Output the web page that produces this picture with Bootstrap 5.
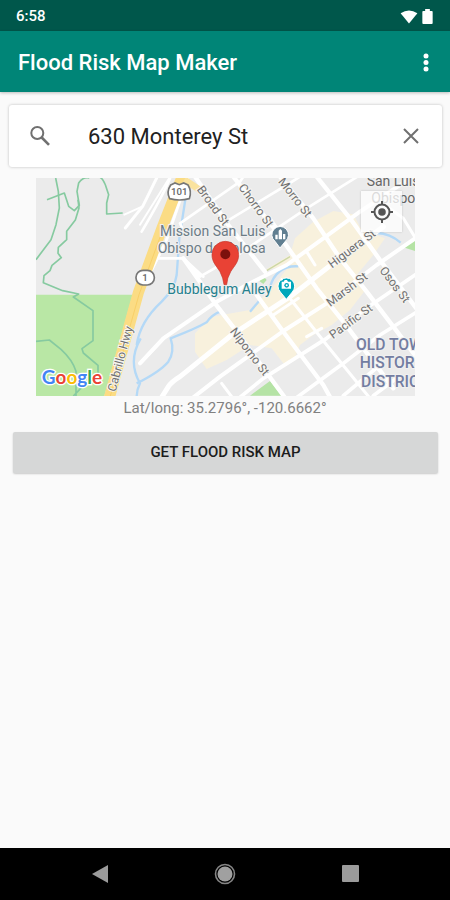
<!DOCTYPE html>
<html lang="en">
<head>
<meta charset="utf-8">
<meta name="viewport" content="width=device-width, initial-scale=1">
<title>Flood Risk Map Maker</title>
<link href="https://cdn.jsdelivr.net/npm/bootstrap@5.3.0/dist/css/bootstrap.min.css" rel="stylesheet">
<style>
body{font-family:Roboto,"Liberation Sans",sans-serif;background:#fafafa;color:#212121}
svg{display:block}
.status-bar{background:#00574b;height:31px;font-size:15px;font-weight:500;padding:2px 17px 0 16px}
.app-bar{background:#008577;height:61px;padding:2px 18px 0;box-shadow:0 1px 3px rgba(0,0,0,.25)}
.app-title{font-size:22px;font-weight:500;line-height:28px}
.icon-btn{background:none;border:0;padding:0;color:#707070}
.search-box{background:#fff;height:62px;margin:13px 8px 0 9px;padding:0 20px;border-radius:3px;box-shadow:0 0 3px rgba(0,0,0,.25)}
.search-box input{font-size:22px;color:#212121;margin-left:37px;min-width:0;outline:0}
.map-wrap{margin:11px 35px 0 36px}
.map-wrap svg.city-map{width:100%;height:auto}
.locate{position:absolute;top:13px;right:13px;width:41px;height:41px;background:rgba(255,255,255,.76);border:0;padding:0;box-shadow:0 0 2px rgba(0,0,0,.18)}
.coords{font-size:15px;line-height:24px;color:#808080}
.risk-btn{background:#d6d7d7;border:0;border-radius:2px;margin:12px 12px 0 13px;height:41px;font-size:15px;font-weight:500;color:#1c1c1c;padding:0;box-shadow:0 1px 2px rgba(0,0,0,.2)}
.risk-btn:hover{background:#c8c9c9}
.system-nav{background:#000;height:52px;padding:0 37px}
.system-nav button{width:125px;height:52px}
.road path{fill:none;stroke:#fff;stroke-linejoin:round;stroke-linecap:round}
.trail path{fill:none;stroke:#86caa0;stroke-width:5;stroke-linejoin:round}
.water path{fill:none;stroke:#b4d9f7;stroke-width:7;stroke-linejoin:round}
.street text{font-size:36px;fill:#707070;stroke:#f6f5f1;stroke-width:6;paint-order:stroke;text-anchor:middle}
.place{font-size:42px;fill:#6b7b85;stroke:#f0f0f0;stroke-width:6;paint-order:stroke}
.district{font-size:47px;font-weight:500;fill:#737da1;stroke:#f0f0f0;stroke-width:6;paint-order:stroke}
.brand{font-family:Lato,sans-serif;font-size:57px;font-weight:700;stroke:#fff;stroke-width:8;paint-order:stroke}
</style>
<script src="https://cdn.jsdelivr.net/npm/bootstrap@5.3.0/dist/js/bootstrap.bundle.min.js"></script>
</head>
<body>
<div class="d-flex flex-column min-vh-100">
<div class="status-bar d-flex align-items-center justify-content-between text-white">
  <span>6:58</span>
  <span class="d-flex align-items-center gap-1">
    <svg width="18" height="14" viewBox="0 0 18 15" fill="#fff" aria-hidden="true"><path d="M0 3.5Q9-2.5 18 3.5L9 14.5Z"/></svg>
    <svg width="11" height="15" viewBox="0 0 11 16" fill="#fff" aria-hidden="true"><path d="M3 0h5v2h2q1 0 1 1v12q0 1-1 1H1q-1 0-1-1V3q0-1 1-1h2Z"/></svg>
  </span>
</div>
<header class="app-bar d-flex align-items-center justify-content-between text-white">
  <h1 class="app-title mb-0">Flood Risk Map Maker</h1>
  <button class="icon-btn" type="button" aria-label="More options"><svg width="12" height="20" viewBox="0 0 12 20" fill="#fff"><circle cx="6" cy="3" r="2.5"/><circle cx="6" cy="9.5" r="2.5"/><circle cx="6" cy="16" r="2.5"/></svg></button>
</header>
<main class="flex-grow-1 d-flex flex-column">
  <form class="search-box d-flex align-items-center" onsubmit="return false">
    <button class="icon-btn" type="submit" aria-label="Search"><svg width="22" height="22" viewBox="0 0 22 22" fill="none" stroke="currentColor" stroke-width="2"><circle cx="8.3" cy="8" r="6"/><path d="M12.7 12.5L20 19.8" stroke-width="2.6"/></svg></button>
    <input class="border-0 bg-transparent p-0 flex-grow-1" type="text" value="630 Monterey St" aria-label="Address">
    <button class="icon-btn" type="button" aria-label="Clear"><svg width="22" height="22" viewBox="0 0 22 22" fill="none" stroke="currentColor" stroke-width="2"><path d="M4 4L18 18M18 4L4 18"/></svg></button>
  </form>
  <div class="map-wrap position-relative">
    <svg class="city-map" viewBox="0 0 1137 654" role="img" aria-label="Map of San Luis Obispo">
      <rect width="1137" height="654" fill="#ebebeb"/>
      <path d="M0 350H290L205 654H0Z" fill="#b9e7a5"/>
      <g transform="translate(312 -9)">
        <path d="M465 190L520 140L580 108L640 118L665 165L735 190L700 240L650 300L672 350L630 405L575 450L520 480L480 510L460 560L430 565L395 520L330 510L260 555L200 582L165 530L165 475L215 425L330 405L395 340L450 270L375 285L450 240Z" fill="#f8f1dd"/>
        <path d="M330 662L390 618L425 662ZM358 318L370 303L380 315L370 327ZM785 215L830 195V230Z" fill="#b5e3a5"/>
        <path d="M375 290L450 245" stroke="#ccd7a5" stroke-width="4"/>
      </g>
      <g class="water" transform="translate(312 -9)">
        <path d="M145 15L118 190L110 300Q105 340 65 380Q0 440 -10 510"/>
        <path d="M-10 625Q60 590 85 560Q105 530 92 490Q170 460 200 442Q215 420 240 410"/>
        <path d="M330 410L360 375M390 335Q410 270 475 274M710 174Q750 175 782 203"/>
        <path d="M2 490Q-38 560 0 625Q-10 645 -10 665"/>
      </g>
      <g class="trail">
        <path d="M59 0L67 40L70 90L60 140L45 185L0 245"/>
        <path d="M33 65L85 45L98 85L115 98L130 82L123 40L128 15Q142 -5 160 0"/>
        <path d="M192 -2Q203 3 212 32L218 50L212 75V108L260 105"/>
        <path d="M126 65L129 90L118 126L92 160V185L67 208L66 226L76 239L48 262L42 278L24 293L22 314L80 338L128 348L112 357L171 398V488L138 512L142 525L186 562V590"/>
        <path d="M0 490L40 486L75 514Q110 546 120 580V654M112 654L137 628"/>
      </g>
      <g class="road" stroke-width="9">
        <path d="M362 0L320 85L268 150"/>
        <path d="M320 85L265 110M312 140L400 0" stroke-width="6"/>
        <path d="M225 670L310 350L390 190L455 0"/>
        <path d="M316 552L390 475"/>
        <g transform="translate(312 -9)" stroke-width="11">
          <path d="M60 675L85 635Q95 620 120 605L275 480L450 365L570 272L730 155" stroke-width="15"/>
          <path d="M150 675L240 605L430 468L560 385L710 270L840 180" stroke-width="12"/>
          <path d="M0 565L70 490L230 380L320 330L440 270L550 190L660 110L840 -10" stroke-width="12"/>
          <path d="M290 675L370 610L560 490L690 392L840 290M460 675L610 565L720 480L840 405M610 662L720 570M700 662L780 602"/>
          <path d="M45 250L130 250L180 305L290 242L500 100L660 0M130 250L190 305M120 145L300 20L310 5M120 145L135 180M225 160L440 30L480 5M5 170Q70 60 90 10" stroke-width="8"/>
          <path d="M130 250L225 385L290 470L385 600L440 675M165 5L265 150L375 290M350 360L430 470L550 630L575 675" stroke-width="13"/>
          <path d="M280 5L410 170L530 340L610 440L760 640M420 5L520 130L600 250L680 350L840 560M530 5L630 130L720 255L840 415" stroke-width="13"/>
          <path d="M430 345L560 510L690 670M720 80L790 130L830 195M400 420L475 370M500 485L545 460M500 230L525 270M245 625L275 665M390 130L430 185" stroke-width="9"/>
        </g>
      </g>
      <path d="M217 670L307 344L378 150L440 -8" fill="none" stroke="#fbdc84" stroke-width="33"/>
      <path d="M445 5L495 38" stroke="#fae39e" stroke-width="20"/>
      <path d="M223 654L309 350L384 145" fill="none" stroke="#f8cf68" stroke-width="3"/>
      <g fill="#fff" stroke="#777" stroke-width="5">
        <path d="M404 21L417 15L430 20L443 15L456 21Q468 40 460 62Q430 70 401 62Q390 42 404 21Z"/>
        <rect x="300" y="277" width="55" height="44" rx="21"/>
      </g>
      <g font-size="29" font-weight="500" fill="#666" text-anchor="middle"><text x="430" y="52">101</text><text x="327" y="309">1</text></g>
      <g class="street">
        <text transform="translate(532 82) rotate(54)" y="13">Broad St</text>
        <text transform="translate(661 82) rotate(54)" y="13">Chorro St</text>
        <text transform="translate(778 58) rotate(52)" y="13">Morro St</text>
        <text transform="translate(947 211) rotate(-37)" y="13">Higuera St</text>
        <text transform="translate(932 333) rotate(-37)" y="13">Marsh St</text>
        <text transform="translate(944 429) rotate(-36)" y="13">Pacific St</text>
        <text transform="translate(1077 319) rotate(53)" y="13">Osos St</text>
        <text transform="translate(642 520) rotate(53)" y="13">Nipomo St</text>
        <text transform="translate(252 542) rotate(-75)" y="13" fill="#765f3b">Cabrillo Hwy</text>
      </g>
      <g class="place"><text x="372" y="175">Mission San Luis</text><text x="365" y="225">Obispo de Tolosa</text><text x="394" y="349" fill="#25808e">Bubblegum Alley</text>
        <text x="992" y="24" fill="#666">San Luis</text><text x="1006" y="74" fill="#666">Obispo</text></g>
      <g class="district"><text x="960" y="517">OLD TOWN</text><text x="971" y="571">HISTORIC</text><text x="975" y="626">DISTRICT</text></g>
      <g stroke="#fff" stroke-width="3">
        <path d="M732 210L717 190A25 25 0 1 1 748 190Z" fill="#617f91"/>
        <path d="M751 364L733 342A25 25 0 1 1 769 342Z" fill="#00a7bb"/>
      </g>
      <path d="M718 184V170H725V184ZM728 184V158L733 153L738 158V184ZM741 184V168H748V184Z" fill="#fff"/>
      <path d="M737 311H743L746 306H753L756 311H765V332H737Z" fill="#fff"/><circle cx="752" cy="322" r="7" fill="#00a7bb"/><circle cx="752" cy="322" r="3" fill="#fff"/><path d="M733 304h8M737 300v8" stroke="#fff" stroke-width="3"/>
      <path d="M564 320Q562 300 552 281C540 262 528 252 528 230A40 40 0 0 1 608 230C608 252 596 262 584 281Q573 300 572 320Z" fill="#e94235" stroke="#c5392e" stroke-width="2"/>
      <circle cx="568" cy="229" r="15" fill="#7d110d"/>
      <text class="brand" x="17" y="618"><tspan fill="#4285f4">G</tspan><tspan fill="#ea4335">o</tspan><tspan fill="#fbbc05">o</tspan><tspan fill="#4285f4">g</tspan><tspan fill="#34a853">l</tspan><tspan fill="#ea4335">e</tspan></text>
    </svg>
    <button class="locate d-flex align-items-center justify-content-center" type="button" aria-label="My location"><svg width="22" height="22" viewBox="0 0 22 22" fill="none" stroke="#555" stroke-width="2"><circle cx="11" cy="11" r="7.5"/><circle cx="11" cy="11" r="3.8" fill="#555" stroke="none"/><path d="M11 0V4M11 18V22M0 11H4M18 11H22"/></svg></button>
  </div>
  <p class="coords text-center mb-0">Lat/long: 35.2796°, -120.6662°</p>
  <button class="risk-btn" type="button">GET FLOOD RISK MAP</button>
</main>
<nav class="system-nav d-flex justify-content-between" aria-label="System">
  <button class="icon-btn d-flex align-items-center justify-content-center" type="button" aria-label="Back"><svg width="18" height="20" viewBox="0 0 18 20"><path d="M1 10L17 1V19Z" fill="#9b9b9b"/></svg></button>
  <button class="icon-btn d-flex align-items-center justify-content-center" type="button" aria-label="Home"><svg width="22" height="22" viewBox="0 0 22 22"><circle cx="11" cy="11" r="9.5" fill="none" stroke="#858585" stroke-width="1.6"/><circle cx="11" cy="11" r="7.5" fill="#a0a0a0"/></svg></button>
  <button class="icon-btn d-flex align-items-center justify-content-center" type="button" aria-label="Recent apps"><svg width="18" height="18" viewBox="0 0 18 18"><rect x="0" y="0" width="17" height="17" rx="1" fill="#9b9b9b"/></svg></button>
</nav>
</div>
</body>
</html>
